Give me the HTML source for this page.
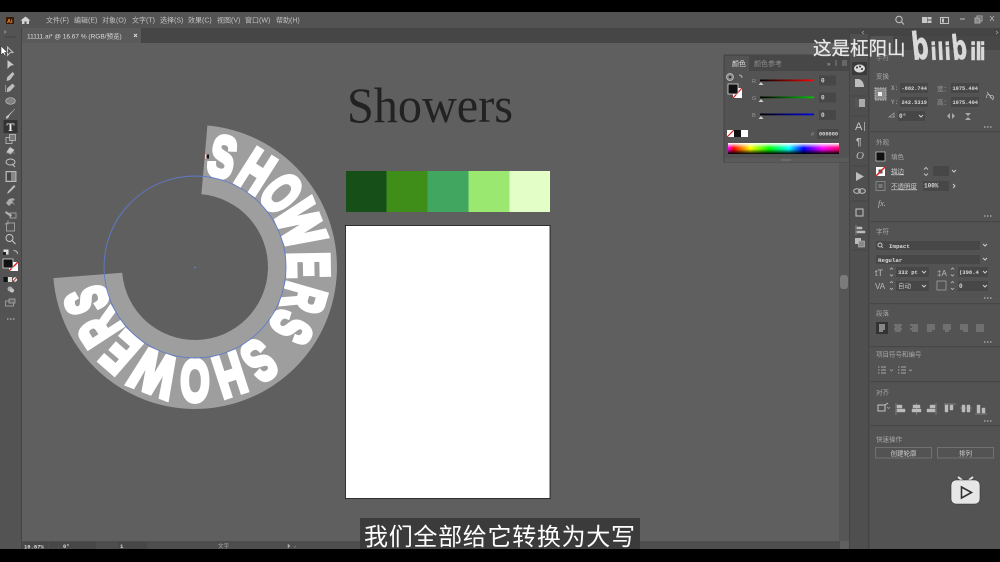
<!DOCTYPE html>
<html lang="zh"><head><meta charset="utf-8"><title>Illustrator</title>
<style>
html,body{margin:0;padding:0;background:#000;width:1000px;height:562px;overflow:hidden}
svg{display:block;filter:blur(.35px)}
text{font-family:"Liberation Sans","Noto Sans CJK SC",sans-serif;fill:#c2c2c2;font-size:7px}
.m{font-family:"Liberation Mono","Noto Sans CJK SC",monospace;font-weight:bold;font-size:6px;fill:#d8d8d8}
.h{fill:#a8a8a8;font-size:6.5px}
.L{font-family:"Liberation Sans",sans-serif;font-weight:bold;font-size:58px;fill:#fff;stroke:#fff;stroke-width:5px;text-anchor:middle}
.B{font-family:"DejaVu Sans",sans-serif;font-weight:bold;fill:#d9d9d9;stroke:#d9d9d9;stroke-width:.5px}
.f{fill:#474747}
.i{fill:#bdbdbd}
.s{stroke:#c4c4c4;stroke-width:1;fill:none}
</style></head><body>
<svg width="1000" height="562" viewBox="0 0 1000 562" xmlns="http://www.w3.org/2000/svg">
<rect width="1000" height="562" fill="#000"/>
<!-- canvas -->
<rect x="0" y="12" width="1000" height="537" fill="#5f5f5f"/>
<!-- menu -->
<rect x="0" y="12" width="1000" height="16" fill="#535353"/>
<rect x="6" y="17" width="8" height="7" fill="#3a1a04"/><text x="7" y="23" style="font-size:5.5px;font-weight:bold;fill:#ff8a1e">Ai</text>
<path d="M20.500 20.500L25.500 16.500L30.500 20.500H29V24H26.500V21.500H24.500V24H22V20.500Z" fill="#d4d4d4"/>
<text x="46" y="22.500">文件(F)</text><text x="74" y="22.500">编辑(E)</text><text x="102" y="22.500">对象(O)</text><text x="132" y="22.500">文字(T)</text><text x="160" y="22.500">选择(S)</text><text x="188" y="22.500">效果(C)</text><text x="217" y="22.500">视图(V)</text><text x="245" y="22.500">窗口(W)</text><text x="276" y="22.500">帮助(H)</text>
<circle cx="899" cy="19.500" r="3.200" class="s" stroke-width="1.200"/><path d="M901.500 22L904 24.500" class="s"/>
<path d="M922 17h5v6h-5zM927.500 17h4v2.500h-4zM927.500 20.500h4v2.500h-4z" fill="#c8c8c8"/>
<rect x="940.500" y="17.500" width="8" height="6" class="s"/><rect x="942" y="18.500" width="2" height="4" fill="#c4c4c4"/>
<path d="M960 19h5" stroke="#aaa" stroke-width="1.200"/><rect x="977" y="16" width="5" height="5" fill="none" stroke="#aaa"/><rect x="975" y="18" width="5" height="5" fill="#888" stroke="#aaa"/>
<path d="M990 16l4 5M994 16l-4 5" stroke="#aaa"/>
<!-- tab bar -->
<rect x="22" y="28" width="828" height="15" fill="#464646"/>
<rect x="22" y="28" width="119" height="15" fill="#5a5a5a"/>
<text x="27" y="38.300" style="font-size:6.500px;fill:#dcdcdc">11111.ai* @ 16.67 % (RGB/预览)</text>
<path d="M134 34l3 3M137 34l-3 3" stroke="#ddd" stroke-width=".9"/>
<!-- left toolbar -->
<rect x="0" y="28" width="22" height="521" fill="#535353"/>
<rect x="21" y="28" width="1" height="521" fill="#434343"/>
<path d="M4 30.500l2 1.500-2 1.500" stroke="#aaa" fill="none" stroke-width=".7"/>
<rect x="5" y="36" width="11" height="2" fill="#4a4a4a"/>
<!-- tool icons -->
<path d="M7.500 47l5.500 5.500-3 .3-2.500 2.700z" class="s" stroke-width=".8"/>
<path d="M1 46v9l2-2 2 3 1-.5-1.500-3h3z" fill="#fff" stroke="#222" stroke-width=".5"/>
<path d="M7.500 60l6.500 5-3.500.8-3 3.200z" fill="#c8c8c8"/>
<path d="M12.500 72l2 2-4.500 6-3.500 1 .7-3.800z" fill="#bdbdbd"/>
<path d="M12.500 84l2 2-4.500 5-3 .8.500-3.500zM5.500 85v7" fill="#bdbdbd" stroke="#bdbdbd" stroke-width=".6"/>
<ellipse cx="10.500" cy="101" rx="4.800" ry="3.300" fill="#808080" stroke="#bdbdbd" stroke-width=".7"/>
<path d="M15 109l-5.500 6-1.500 3-2 .5.500-2 2-1.500z" fill="#c8c8c8" stroke="#c8c8c8" stroke-width=".4"/>
<rect x="3.500" y="120" width="14" height="13" fill="#333"/>
<text x="10.500" y="131" text-anchor="middle" style="font-family:'Liberation Serif',serif;font-size:12px;font-weight:bold;fill:#eee">T</text>
<rect x="6" y="137.500" width="6" height="6" fill="none" stroke="#bdbdbd" stroke-width=".8"/><rect x="9.500" y="134.500" width="6" height="6" fill="#777" stroke="#bdbdbd" stroke-width=".8"/>
<path d="M10 147l4.500 3-4 4.500-4-2.500z" fill="#c8c8c8"/><path d="M6 153h9" stroke="#999" stroke-width=".6"/>
<ellipse cx="10.500" cy="162" rx="4.500" ry="3" class="s" stroke-width=".8"/><path d="M12 164l3 3" stroke="#c4c4c4"/>
<rect x="6" y="171.500" width="10" height="10" fill="#888" stroke="#ccc" stroke-width=".8"/><rect x="7" y="172.500" width="4" height="8" fill="#444"/>
<path d="M14 185l1.500 1.500-6 6-2.500 1.500 1-2.500z" fill="#bdbdbd"/>
<path d="M6 203l3-4 4-1 2 2-3 1 3 4-3-2-3 3z" fill="#aaa"/>
<path d="M6 211l6 4-1 2-6-4z" fill="#b0b0b0"/><rect x="10" y="213" width="6" height="5" fill="none" stroke="#bbb" stroke-width=".7"/>
<rect x="6.500" y="223" width="8" height="8" fill="none" stroke="#b0b0b0" stroke-width=".8"/><path d="M8 220v4M4.500 224h4" stroke="#b0b0b0" stroke-width=".6"/>
<circle cx="9.500" cy="238" r="3.500" class="s" stroke-width=".9"/><path d="M12 240.500l3.500 3.500" stroke="#c4c4c4" stroke-width="1.200"/>
<rect x="3.500" y="249.500" width="5" height="5" fill="#ddd"/><rect x="3" y="252" width="3" height="3" fill="#222"/>
<path d="M13.500 250.500c2.500 0 4 1 4 3.500" stroke="#bbb" fill="none"/>
<rect x="9" y="262" width="9" height="9" fill="#fff"/><path d="M9 271l9-9" stroke="#e01d1d" stroke-width="1.400"/>
<rect x="3" y="259" width="10" height="9" fill="#111" stroke="#ddd" stroke-width=".8"/>
<rect x="3.500" y="277" width="4" height="5" fill="#111"/><rect x="8" y="277" width="4" height="5" fill="#ddd"/><circle cx="15" cy="279.500" r="2.200" fill="#eee"/><path d="M13.500 281l3-3" stroke="#d22"/>
<circle cx="10" cy="289" r="2.500" fill="#aaa"/><circle cx="12" cy="290.500" r="2" fill="#c5c5c5"/>
<rect x="5.500" y="301" width="8" height="5" fill="none" stroke="#aaa" stroke-width=".8"/><rect x="9" y="299" width="6" height="4" fill="#666" stroke="#aaa" stroke-width=".8"/>
<path d="M7 319h1.500M10 319h1.500M13 319h1.500" stroke="#ccc"/>
<!-- status bar -->
<rect x="22" y="541" width="818" height="8" fill="#4d4d4d"/>
<rect x="23" y="542" width="25" height="7" class="f"/><rect x="49" y="542" width="9" height="7" class="f"/><rect x="59" y="542" width="17" height="7" class="f"/>
<rect x="76" y="542" width="20" height="7" class="f"/><rect x="118" y="542" width="20" height="7" class="f"/><rect x="138" y="542" width="9" height="7" class="f"/>
<text x="24" y="548.300" class="m" style="font-size:5.500px">16.67%</text><text x="63" y="548" class="m" style="font-size:5.500px">0°</text><text x="120" y="548" class="m" style="font-size:5.500px">1</text>
<text x="218" y="548" style="font-size:5.500px;fill:#aaa">文字</text>
<path d="M288 544v4l2-2zM296 546l-2 1.500" fill="#aaa" stroke="#aaa" stroke-width=".5"/>
<!-- scrollbar -->
<rect x="839" y="43" width="11" height="498" fill="#565656"/>
<rect x="840" y="275" width="8" height="14" rx="3" fill="#7b7b7b"/>
<!-- artboard content -->
<text x="347" y="122" textLength="166" lengthAdjust="spacingAndGlyphs" style="font-family:'Liberation Serif',serif;font-size:50px;fill:#222">Showers</text>
<rect x="346" y="171" width="40.500" height="41" fill="#174f18"/><rect x="386.500" y="171" width="41" height="41" fill="#3f8e1a"/><rect x="427.500" y="171" width="41" height="41" fill="#40a660"/><rect x="468.500" y="171" width="41" height="41" fill="#9ae870"/><rect x="509.500" y="171" width="40.500" height="41" fill="#e4fec8"/>
<rect x="345.500" y="225.500" width="204.500" height="273" fill="#fff" stroke="#111" stroke-width=".8"/>
<!-- ring -->
<path d="M207.400 125.500A142 142 0 1 1 53.400 278.100L122.200 272.700A73 73 0 1 0 201.400 194.300Z" fill="#9e9e9e"/>
<g>
<g transform="rotate(14 195 267) translate(195 173.500) scale(.66 1)"><text class="L">S</text></g>
<g transform="rotate(32.500 195 267) translate(195 173.500) scale(.68 1)"><text class="L">H</text></g>
<g transform="rotate(49.500 195 267) translate(195 173.500) scale(.64 1)"><text class="L">O</text></g>
<g transform="rotate(68 195 267) translate(195 173.500) scale(.78 1)"><text class="L">W</text></g>
<g transform="rotate(89 195 267) translate(195 173.500) scale(.66 1)"><text class="L">E</text></g>
<g transform="rotate(106 195 267) translate(195 173.500) scale(.62 1)"><text class="L">R</text></g>
<g transform="rotate(122 195 267) translate(195 173.500) scale(.62 1)"><text class="L">S</text></g>
<g transform="rotate(145.500 195 267) translate(195 173.500) scale(.66 1)"><text class="L">S</text></g>
<g transform="rotate(162 195 267) translate(195 173.500) scale(.68 1)"><text class="L">H</text></g>
<g transform="rotate(180 195 267) translate(195 173.500) scale(.64 1)"><text class="L">O</text></g>
<g transform="rotate(201 195 267) translate(195 173.500) scale(.78 1)"><text class="L">W</text></g>
<g transform="rotate(221 195 267) translate(195 173.500) scale(.66 1)"><text class="L">E</text></g>
<g transform="rotate(237 195 267) translate(195 173.500) scale(.62 1)"><text class="L">R</text></g>
<g transform="rotate(253 195 267) translate(195 173.500) scale(.62 1)"><text class="L">S</text></g>
</g>
<circle cx="195" cy="267" r="91" fill="none" stroke="#5f7ac9" stroke-width=".9"/>
<circle cx="195" cy="267.500" r="1" fill="#5f7ac9"/>
<rect x="205" y="154" width="3" height="5" fill="#fff" stroke="#c44" stroke-width=".4"/><rect x="206.500" y="154.500" width="2.500" height="4" fill="#111"/>
<!-- colour panel -->
<rect x="724" y="55" width="126" height="107" fill="#535353" stroke="#464646"/>
<rect x="724" y="55" width="126" height="16" fill="#474747"/>
<rect x="725" y="56" width="24" height="15" fill="#535353"/>
<text x="732" y="66" style="font-size:7px;fill:#ddd">颜色</text><text x="754" y="66" style="font-size:7px;fill:#8e8e8e">颜色参考</text>
<text x="827" y="66" style="font-size:6px;fill:#bbb">&#187;</text><path d="M836 60v6M842 61h5M842 63h5M842 65h5" stroke="#999" stroke-width=".7"/>
<circle cx="730" cy="77" r="3.500" fill="#888" stroke="#ccc" stroke-width=".7"/><circle cx="730" cy="77" r="1.300" fill="#333"/>
<path d="M739 75c2 0 3 1 3 3" stroke="#bbb" fill="none"/>
<rect x="733" y="88" width="9" height="10" fill="#fff"/><path d="M733 98l9-10" stroke="#e01d1d" stroke-width="1.300"/>
<rect x="728" y="84" width="10" height="10" fill="#111" stroke="#ddd" stroke-width=".8"/>
<defs>
<linearGradient id="r"><stop offset="0" stop-color="#000"/><stop offset="1" stop-color="#f00"/></linearGradient>
<linearGradient id="g"><stop offset="0" stop-color="#000"/><stop offset="1" stop-color="#0c0"/></linearGradient>
<linearGradient id="b"><stop offset="0" stop-color="#000"/><stop offset="1" stop-color="#00e"/></linearGradient>
<linearGradient id="sp"><stop offset="0" stop-color="#f0f"/><stop offset=".05" stop-color="#f00"/><stop offset=".2" stop-color="#ff0"/><stop offset=".37" stop-color="#0f0"/><stop offset=".55" stop-color="#0ff"/><stop offset=".68" stop-color="#00f"/><stop offset=".85" stop-color="#f0f"/><stop offset="1" stop-color="#f06"/></linearGradient>
<linearGradient id="v" x1="0" y1="0" x2="0" y2="1"><stop offset="0" stop-color="#fff"/><stop offset=".45" stop-color="#fff" stop-opacity="0"/><stop offset=".55" stop-color="#000" stop-opacity="0"/><stop offset="1" stop-color="#000"/></linearGradient>
</defs>
<text x="752" y="83" style="font-size:5.500px;fill:#999">R</text><rect x="760" y="79.500" width="53" height="1.800" fill="url(#r)"/><path d="M761 82l2.500 3h-5z" fill="#ccc"/><rect x="819" y="75.500" width="17" height="10" class="f"/><text x="821" y="82.500" class="m">0</text>
<text x="752" y="100" style="font-size:5.500px;fill:#999">G</text><rect x="760" y="96.500" width="54" height="1.800" fill="url(#g)"/><path d="M761 99l2.500 3h-5z" fill="#ccc"/><rect x="819" y="92.500" width="17" height="10" class="f"/><text x="821" y="99.500" class="m">0</text>
<text x="752" y="117" style="font-size:5.500px;fill:#999">B</text><rect x="760" y="113.500" width="54" height="1.800" fill="url(#b)"/><path d="M761 116l2.500 3h-5z" fill="#ccc"/><rect x="819" y="110" width="17" height="10" class="f"/><text x="821" y="117" class="m">0</text>
<rect x="727" y="130" width="7" height="7" fill="#fff"/><path d="M727 137l7-7" stroke="#e01d1d" stroke-width="1.200"/><rect x="734" y="130" width="7" height="7" fill="#111"/><rect x="741" y="130" width="7" height="7" fill="#fff"/>
<text x="811" y="136" style="font-size:5.500px;fill:#999">#</text><rect x="817" y="129" width="22" height="10" class="f"/><text x="819" y="135.500" class="m" style="font-size:5.300px">000000</text>
<rect x="728" y="143" width="111" height="11" fill="url(#sp)"/><rect x="728" y="143" width="111" height="11" fill="url(#v)"/>
<rect x="725" y="158" width="125" height="4" fill="#5a5a5a"/><rect x="781" y="159" width="10" height="2" fill="#6a6a6a"/>
<!-- icon strip -->
<rect x="850" y="28" width="19" height="521" fill="#4f4f4f"/>
<rect x="849" y="28" width="1" height="521" fill="#444"/><rect x="868" y="28" width="1.500" height="521" fill="#444"/>
<rect x="850" y="28" width="19" height="6" fill="#444"/>
<rect x="852" y="62" width="15" height="13" fill="#3a3a3a"/>
<ellipse cx="859.500" cy="68.500" rx="5.500" ry="4" fill="#d8d8d8"/><circle cx="857" cy="67.500" r="1" fill="#333"/><circle cx="860" cy="66.500" r="1" fill="#333"/><circle cx="862" cy="69" r="1" fill="#333"/>
<path d="M855 79h4c3 1 5 4 5 8h-9z" fill="#bdbdbd"/>
<rect x="855" y="99" width="10" height="8" fill="#aaa"/><rect x="855" y="99" width="4" height="8" fill="#555"/>
<text x="855" y="130" style="font-size:11px;fill:#c4c4c4">A</text><path d="M864.500 122v9" stroke="#c4c4c4" stroke-width=".7"/>
<text x="856" y="145" style="font-size:10px;font-weight:bold;fill:#bbb">¶</text>
<text x="856" y="159" style="font-family:'Liberation Serif',serif;font-style:italic;font-size:11px;fill:#bbb">O</text>
<path d="M856 172l8 4.500-8 4.500z" fill="#bdbdbd"/>
<ellipse cx="857" cy="191" rx="3.300" ry="2.300" class="s" stroke-width=".9"/><ellipse cx="862" cy="191" rx="3.300" ry="2.300" class="s" stroke-width=".9"/>
<rect x="856" y="209" width="7" height="7" class="s" stroke-width=".9"/>
<path d="M856 225v10M857 227h5v2h-5zM857 231h8v2h-8z" fill="#bbb" stroke="#bbb" stroke-width=".5"/>
<rect x="855" y="238" width="6" height="6" fill="#bbb"/><rect x="858.500" y="241" width="6" height="6" fill="#888" stroke="#bbb" stroke-width=".6"/>
<path d="M851 96h16M851 116h16M851 166h16M851 201h16M851 250h16" stroke="#444"/>
<!-- properties -->
<rect x="869.500" y="28" width="130.500" height="521" fill="#535353"/>
<rect x="869.500" y="28" width="130.500" height="8" fill="#444"/>
<rect x="869.500" y="36" width="130.500" height="14" fill="#474747"/>
<rect x="871" y="36" width="22" height="14" fill="#535353"/>
<text x="876" y="60" style="font-size:6.500px;fill:#8c8c8c">手符</text>
<path d="M996 31l2 1.500-2 1.500M864 31l-2 1.500 2 1.500" stroke="#aaa" fill="none" stroke-width=".6"/>
<text x="876" y="78.500" class="h">变换</text>
<rect x="875" y="88" width="11" height="12" fill="#8a8a8a" stroke="#bbb" stroke-dasharray="1.500 1"/><rect x="878" y="92" width="4" height="4" fill="#eee"/>
<text x="891" y="90" class="m" style="fill:#999">X:</text><rect x="900" y="83" width="28" height="10" class="f"/><text x="901.500" y="90" class="m" style="font-size:5.300px">-882.744</text>
<text x="891" y="104" class="m" style="fill:#999">Y:</text><rect x="900" y="97" width="28" height="10" class="f"/><text x="901.500" y="104" class="m" style="font-size:5.300px">242.5319</text>
<text x="937" y="91" style="font-size:6.500px;fill:#999">宽：</text><rect x="951" y="83" width="28" height="10" class="f"/><text x="952.500" y="90" class="m" style="font-size:5.300px">1075.404</text>
<text x="937" y="104.500" style="font-size:6.500px;fill:#999">高：</text><rect x="951" y="97" width="28" height="10" class="f"/><text x="952.500" y="104" class="m" style="font-size:5.300px">1075.404</text>
<path d="M987 92l6 8M987 98a2 2 0 1 1 3 0M990 96a2 2 0 1 1 3 3" stroke="#bbb" stroke-width=".8" fill="none"/>
<path d="M889 117l5-4v4zM889 117h6" stroke="#aaa" stroke-width=".7" fill="none"/>
<rect x="898" y="111" width="27" height="10" class="f"/><text x="899" y="118" class="m">0°</text><path d="M919 115l2 2 2-2" stroke="#ccc" fill="none"/>
<path d="M950 113v6l-3-3zM952 113v6l3-3zM965 113h6l-3 3zM965 120h6l-3-3z" fill="#aaa"/>
<path d="M984 127h1.500M987 127h1.500M990 127h1.500" stroke="#ccc"/>
<rect x="870" y="131" width="130" height="1.200" fill="#474747"/>
<text x="876" y="144.500" class="h">外观</text>
<rect x="876" y="152" width="9" height="9" fill="#111" stroke="#ccc" stroke-width=".7"/><text x="891" y="159" style="font-size:6.500px;fill:#aaa">填色</text>
<rect x="876" y="167" width="9" height="9" fill="#fff"/><path d="M876 176l9-9" stroke="#e01d1d" stroke-width="1.400"/><rect x="878.500" y="169.500" width="4" height="4" fill="#535353"/><path d="M878 174l5-5" stroke="#e01d1d" stroke-width="1.200"/>
<text x="891" y="173.500" style="font-size:6.500px;fill:#ccc;text-decoration:underline">描边</text>
<path d="M924 169.500l2-2 2 2M924 173.500l2 2 2-2" stroke="#bbb" fill="none"/><rect x="933" y="166" width="16" height="10" class="f"/><path d="M952 170l2 2 2-2" stroke="#ccc" fill="none"/>
<rect x="876" y="181.500" width="9" height="9" fill="none" stroke="#999" stroke-width=".7"/><rect x="878.500" y="184" width="4" height="4" fill="#777"/>
<text x="891" y="188.500" style="font-size:6.500px;fill:#ccc;text-decoration:underline">不透明度</text>
<rect x="923" y="181" width="26" height="10" class="f"/><text x="924" y="187.500" class="m">100%</text><path d="M953 184l2 2-2 2" stroke="#ccc" fill="none"/>
<text x="878" y="206" style="font-family:'Liberation Serif',serif;font-style:italic;font-size:8px;fill:#bbb">fx.</text>
<path d="M984 216h1.500M987 216h1.500M990 216h1.500" stroke="#ccc"/>
<rect x="870" y="221" width="130" height="1.200" fill="#474747"/>
<text x="876" y="233.500" class="h">字符</text>
<rect x="876" y="241" width="104" height="9" class="f"/><circle cx="880" cy="245" r="2" class="s" stroke-width=".7"/><path d="M881.500 246.500l1.500 1.500" stroke="#c4c4c4" stroke-width=".8"/><text x="889" y="248" class="m" style="font-size:5.800px">Impact</text><path d="M983 244l2 2 2-2" stroke="#ccc" fill="none"/>
<rect x="876" y="255" width="104" height="9" class="f"/><text x="878" y="262" class="m" style="font-size:5.800px">Regular</text><path d="M983 258l2 2 2-2" stroke="#ccc" fill="none"/>
<text x="875" y="276" style="font-size:9px;fill:#bbb">tT</text><path d="M890 269.500l1.500-1.500 1.500 1.500M890 274.500l1.500 1.500 1.500-1.500" stroke="#bbb" fill="none" stroke-width=".8"/>
<rect x="896" y="267" width="33" height="10" class="f"/><text x="898" y="274" class="m" style="font-size:5.500px">332 pt</text><path d="M922 271l2 2 2-2" stroke="#ccc" fill="none"/>
<text x="937" y="276" style="font-size:8px;fill:#bbb">‡A</text><path d="M951 269.500l1.500-1.500 1.500 1.500M951 274.500l1.500 1.500 1.500-1.500" stroke="#bbb" fill="none" stroke-width=".8"/>
<rect x="958" y="267" width="30" height="10" class="f"/><text x="959" y="274" class="m" style="font-size:5.500px">(398.4</text><path d="M983 271l2 2 2-2" stroke="#ccc" fill="none"/>
<text x="875" y="289" style="font-size:8px;fill:#bbb">VA</text><path d="M890 283l1.500-1.500 1.500 1.500M890 288l1.500 1.500 1.500-1.500" stroke="#bbb" fill="none" stroke-width=".8"/>
<rect x="896" y="281" width="33" height="10" class="f"/><text x="898" y="288" style="font-size:6.500px">自动</text><path d="M922 285l2 2 2-2" stroke="#ccc" fill="none"/>
<rect x="937" y="281" width="9" height="9" fill="none" stroke="#aaa" stroke-width=".7"/><path d="M951 283l1.500-1.500 1.500 1.500M951 288l1.500 1.500 1.500-1.500" stroke="#bbb" fill="none" stroke-width=".8"/>
<rect x="958" y="281" width="30" height="10" class="f"/><text x="959" y="288" class="m">0</text><path d="M983 285l2 2 2-2" stroke="#ccc" fill="none"/>
<path d="M984 298h1.500M987 298h1.500M990 298h1.500" stroke="#ccc"/>
<rect x="870" y="303" width="130" height="1.200" fill="#474747"/>
<text x="876" y="315.500" class="h">段落</text>
<rect x="876" y="322" width="12" height="12" fill="#333"/>
<path d="M879 325h6M879 327h6M879 329h6M879 331h4" stroke="#ddd" stroke-width="1.100"/>
<path d="M894 325h8M895 327h6M894 329h8M895 331h6M910 325h8M912 327h6M910 329h8M912 331h6M927 325h8M927 327h8M927 329h8M927 331h5M943 325h8M943 327h8M943 329h8M945 331h4M960 325h8M960 327h8M960 329h8M963 331h5M976 325h8M976 327h8M976 329h8M976 331h8" stroke="#8d8d8d" stroke-width="1.100"/>
<path d="M984 342h1.500M987 342h1.500M990 342h1.500" stroke="#ccc"/>
<rect x="870" y="346" width="130" height="1.200" fill="#474747"/>
<text x="876" y="356.500" class="h">项目符号和编号</text>
<path d="M878 367h1.500M881 367h5M878 370h1.500M881 370h5M878 373h1.500M881 373h5M898 367h1.500M901 367h5M898 370h1.500M901 370h5M898 373h1.500M901 373h5" stroke="#aaa"/>
<path d="M890 369.500l1.500 1.500 1.500-1.500M909 369.500l1.500 1.500 1.500-1.500" stroke="#aaa" fill="none" stroke-width=".7"/>
<rect x="870" y="381" width="130" height="1.200" fill="#474747"/>
<text x="876" y="394.500" class="h">对齐</text>
<path d="M878 405h7v6h-7zM885 405l3-2" class="s" stroke-width=".8"/><path d="M887 407l1.500 1.500 1.500-1.500" stroke="#aaa" fill="none" stroke-width=".7"/>
<path d="M896 403v12M897 405h5v3h-5zM897 409h8v3h-8zM916.500 403v12M913 405h7v3h-7zM912 409h9v3h-9zM936 403v12M930 405h5v3h-5zM927 409h8v3h-8zM944 404h12M945 405h3v7h-3zM950 405h3v5h-3zM960 408h12M962 405h3v7h-3zM967 405h3v7h-3zM975 414h12M977 405h3v8h-3zM982 408h3v5h-3z" fill="#bbb" stroke="#bbb" stroke-width=".4"/>
<path d="M984 421h1.500M987 421h1.500M990 421h1.500" stroke="#ccc"/>
<rect x="870" y="425" width="130" height="1.200" fill="#474747"/>
<text x="876" y="441.500" class="h">快速操作</text>
<rect x="875.500" y="447.500" width="56" height="10.500" fill="none" stroke="#707070"/><text x="903.500" y="455.500" text-anchor="middle" style="font-size:6.500px;fill:#d0d0d0">创建轮廓</text>
<rect x="937.500" y="447.500" width="56" height="10.500" fill="none" stroke="#707070"/><text x="965.500" y="455.500" text-anchor="middle" style="font-size:6.500px;fill:#d0d0d0">排列</text>
<!-- watermark -->
<text x="813" y="55" style="font-size:18.500px;fill:#e8e8e8;stroke:#e8e8e8;stroke-width:.3px">这是柾阳山</text>
<g transform="translate(913 60) rotate(-6) scale(.62 1)"><text class="B" style="font-size:38px">b</text></g>
<g transform="translate(931 60) rotate(-3) scale(.75 1)"><text class="B" style="font-size:24px">i</text></g>
<g transform="translate(938 60) rotate(-3) scale(.75 1)"><text class="B" style="font-size:24px">l</text></g>
<g transform="translate(945 60) rotate(-3) scale(.75 1)"><text class="B" style="font-size:24px">i</text></g>
<g transform="translate(953 60) rotate(-6) scale(.62 1)"><text class="B" style="font-size:34px">b</text></g>
<g transform="translate(970 60) scale(.75 1)"><text class="B" style="font-size:24px">i</text></g>
<g transform="translate(975.500 60) scale(.75 1)"><text class="B" style="font-size:24px">l</text></g>
<g transform="translate(980 60) scale(.65 1)"><text class="B" style="font-size:24px">i</text></g>
<!-- play badge -->
<path d="M958 477l4 3M973 477l-4 3" stroke="#e4e4e4" stroke-width="2"/>
<rect x="951" y="480" width="29" height="24" rx="5" fill="#e6e6e6" stroke="#333" stroke-width=".6"/>
<path d="M961.500 487l10 5.500-10 5.500z" fill="none" stroke="#333" stroke-width="1.600"/>
<!-- subtitle -->
<rect x="360" y="518" width="280" height="31" fill="#3b3b3b"/>
<text x="364" y="545" textLength="271" style="font-family:'Noto Sans CJK SC','Liberation Sans',sans-serif;font-size:24px;fill:#fff">我们全部给它转换为大写</text>
</svg>
</body></html>
